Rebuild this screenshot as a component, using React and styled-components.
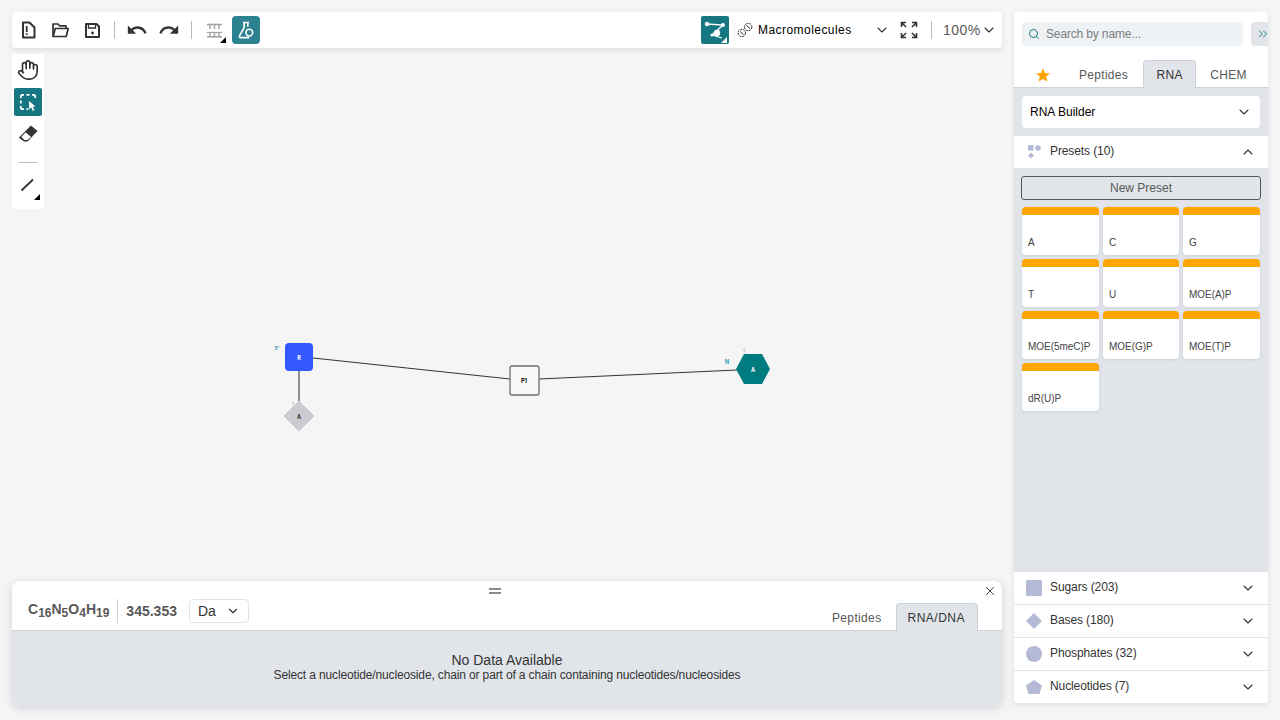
import React from "react";
import styled, { createGlobalStyle } from "styled-components";
import { ChevronDown, ChevronUp, ChevronsRight, Search, X, Hand } from "lucide-react";
import { MdUndo, MdRedo } from "react-icons/md";

const GlobalStyle = createGlobalStyle`
  html, body {
    margin: 0;
    height: 100%;
    background: #f5f5f5;
    overflow: hidden;
    font-family: "Liberation Sans", Inter, sans-serif;
  }
`;

const Page = styled.div`
  width: 1280px;
  height: 720px;
  display: flex;
  gap: 12px;
  padding: 12px 12px 0;
  box-sizing: border-box;
`;

const Main = styled.main`
  position: relative;
  width: 990px;
  height: 694px;
  display: flex;
  flex-direction: column;
`;

const Toolbar = styled.header`
  position: relative;
  z-index: 1;
  height: 36px;
  flex: none;
  display: flex;
  align-items: center;
  gap: 4px;
  padding: 0 2px;
  background: #fff;
  border-radius: 4px;
  box-shadow: 0 2px 5px rgba(103, 104, 132, 0.15);
`;

const Spread = styled.div`
  flex: 1;
`;

const IconButton = styled.div`
  position: relative;
  width: 28px;
  height: 28px;
  flex: none;
  display: flex;
  align-items: center;
  justify-content: center;
  border-radius: ${(p) => (p.$round ? "4px" : "2px")};
  color: ${(p) => (p.$active ? "#fff" : "#333")};
  background: ${(p) => p.$bg || "transparent"};
`;

const Corner = styled.span`
  position: absolute;
  right: 2px;
  bottom: 1px;
  width: 0;
  height: 0;
  border-style: solid;
  border-width: 0 0 6px 6px;
  border-color: transparent transparent ${(p) => p.$color || "#000"} transparent;
`;

const Sep = styled.span`
  width: 1px;
  height: 18px;
  margin: 0 4px;
  background: #b4b9c6;
`;

const ModeSelect = styled.div`
  width: 158px;
  flex: none;
  display: flex;
  align-items: center;
  padding: 0 1px 0 4px;
  box-sizing: border-box;
  font-size: 12px;
  letter-spacing: 0.45px;
  color: #000;
`;

const ModeLabel = styled.span`
  flex: 1;
  margin-left: 5px;
`;

const Zoom = styled.div`
  width: 57px;
  flex: none;
  margin-left: 3px;
  padding-right: 3px;
  box-sizing: border-box;
  display: flex;
  align-items: center;
  font-size: 14px;
  letter-spacing: 0.5px;
  color: #585858;
`;

const Tools = styled.aside`
  position: relative;
  z-index: 1;
  width: 32px;
  height: 155px;
  margin-top: 6px;
  flex: none;
  display: flex;
  flex-direction: column;
  align-items: center;
  padding-top: 2px;
  gap: 4px;
  box-sizing: border-box;
  background: #fff;
  border-radius: 2px;
`;

const ToolSep = styled.span`
  width: 18px;
  height: 1px;
  margin: 10px 0 6px;
  background: #b4b9c6;
`;

const Canvas = styled.svg`
  position: absolute;
  left: 0;
  top: 0;
  width: 990px;
  height: 694px;
`;

const Bottom = styled.section`
  position: relative;
  z-index: 1;
  margin-top: auto;
  height: 125px;
  flex: none;
  display: flex;
  flex-direction: column;
  background: #fff;
  border-radius: 8px;
  overflow: hidden;
  box-shadow: 0 2px 8px rgba(103, 104, 132, 0.25);
`;

const Handle = styled.span`
  position: absolute;
  left: 477px;
  top: 7px;
  width: 12px;
  height: 2px;
  border-top: 2px solid #8a8a8a;
  border-bottom: 2px solid #8a8a8a;
`;

const CloseBtn = styled.span`
  position: absolute;
  right: 5px;
  top: 3px;
  display: flex;
  color: #333;
`;

const BottomBar = styled.div`
  height: 50px;
  flex: none;
  display: flex;
  align-items: flex-end;
  padding: 0 24px 0 16px;
  border-bottom: 1px solid #ccd1da;
  box-sizing: border-box;
`;

const Stats = styled.div`
  flex: 1;
  height: 31px;
  display: flex;
  align-items: center;
  padding-bottom: 7px;
  box-sizing: border-box;
  color: #585858;
  font-size: 14px;
  font-weight: 700;
`;

const Formula = styled.span`
  padding-right: 8px;
  border-right: 1px solid #ccd1da;
  height: 24px;
  line-height: 21px;

  & sub {
    font-size: 12px;
    line-height: 0;
    vertical-align: -3px;
  }
`;

const Mass = styled.span`
  margin-left: 8px;
`;

const Unit = styled.div`
  width: 60px;
  height: 24px;
  margin-left: 12px;
  padding: 0 8px;
  display: flex;
  align-items: center;
  justify-content: space-between;
  box-sizing: border-box;
  border: 1px solid #e1e5ea;
  border-radius: 4px;
  color: #333;
  font-size: 14px;
  font-weight: 400;
`;

const BottomTabs = styled.div`
  display: flex;
  gap: 2px;
  height: 28px;
  align-items: stretch;
  margin-bottom: -1px;
`;

const BottomTab = styled.div`
  padding: 0 12px 0 ${(p) => (p.$active ? 10 : 12)}px;
  display: flex;
  align-items: center;
  font-size: 12px;
  letter-spacing: ${(p) => (p.$active ? 0.5 : 0.35)}px;
  border: 1px solid ${(p) => (p.$active ? "#ccd1da" : "transparent")};
  border-bottom: 0;
  border-radius: 4px 4px 0 0;
  background: ${(p) => (p.$active ? "#e1e5ea" : "transparent")};
  color: ${(p) => (p.$active ? "#333" : "#585858")};
`;

const NoData = styled.div`
  flex: 1;
  display: flex;
  flex-direction: column;
  align-items: center;
  padding-top: 21px;
  background: #e1e5ea;
  color: #333;
  font-size: 14px;
  line-height: 16px;

  & small {
    font-size: 12px;
    letter-spacing: -0.14px;
    line-height: 14px;
  }
`;

const Library = styled.aside`
  width: 254px;
  height: 691px;
  flex: none;
  display: flex;
  flex-direction: column;
  overflow: hidden;
  background: #fff;
  border-radius: 4px;
  box-shadow: 0 2px 5px rgba(103, 104, 132, 0.15);
`;

const SearchRow = styled.div`
  display: flex;
  gap: 8px;
  padding: 10px 0 0 8px;
`;

const SearchBox = styled.div`
  width: 221px;
  height: 24px;
  flex: none;
  display: flex;
  align-items: center;
  gap: 6px;
  padding-left: 6px;
  box-sizing: border-box;
  background: #eff2f5;
  border-radius: 4px;
  color: #7c7c7f;
  font-size: 12px;
  letter-spacing: -0.15px;
`;

const ExpandBtn = styled.div`
  width: 24px;
  height: 24px;
  flex: none;
  display: flex;
  align-items: center;
  justify-content: center;
  background: #e1e5ea;
  border-radius: 4px;
  color: #167782;
`;

const LibTabs = styled.div`
  height: 28px;
  margin-top: 14px;
  flex: none;
  display: flex;
  padding-left: 8px;
  box-sizing: border-box;
  border-bottom: 1px solid #ccd1da;
`;

const LibTab = styled.div`
  height: 28px;
  padding: 0 ${(p) => p.$pad || 12}px;
  margin-right: 1px;
  display: flex;
  align-items: center;
  box-sizing: border-box;
  font-size: 12px;
  letter-spacing: 0.3px;
  border: 1px solid ${(p) => (p.$active ? "#ccd1da" : "transparent")};
  border-bottom: 0;
  border-radius: 4px 4px 0 0;
  background: ${(p) => (p.$active ? "#e1e5ea" : "transparent")};
  color: ${(p) => (p.$active ? "#333" : "#585858")};
`;

const BuilderWrap = styled.div`
  height: 48px;
  flex: none;
  padding: 8px;
  box-sizing: border-box;
  background: #e1e5ea;
`;

const Builder = styled.div`
  height: 32px;
  display: flex;
  align-items: center;
  justify-content: space-between;
  padding: 0 8px;
  background: #fff;
  border-radius: 4px;
  color: #000;
  font-size: 12px;
`;

const SectionHead = styled.div`
  height: ${(p) => p.$h || 33}px;
  flex: none;
  display: flex;
  align-items: center;
  padding: 0 12px;
  box-sizing: border-box;
  background: #fff;
  border-bottom: ${(p) => (p.$last ? "0" : "1px solid #e1e5ea")};
  color: #333;
  font-size: 12px;
  letter-spacing: -0.1px;
`;

const SectionIcon = styled.svg`
  width: 16px;
  height: 16px;
  flex: none;
  margin-right: 8px;
  color: #b4b9d6;
`;

const SectionTitle = styled.span`
  flex: 1;
  margin-top: -2px;
`;

const Presets = styled.div`
  flex: 1;
  background: #e1e5ea;
  padding: 8px 8px 0;
`;

const NewPreset = styled.div`
  height: 24px;
  margin: 0 -1px 7px;
  display: flex;
  align-items: center;
  justify-content: center;
  box-sizing: border-box;
  border: 1px solid #585858;
  border-radius: 3px;
  color: #585858;
  font-size: 12px;
`;

const CardGrid = styled.div`
  display: grid;
  grid-template-columns: 77px 76px 77px;
  grid-auto-rows: 48px;
  gap: 4px;
`;

const Card = styled.div`
  display: flex;
  align-items: flex-end;
  padding: 0 0 6px 6px;
  box-sizing: border-box;
  background: #fff;
  border-top: 8px solid #ffa500;
  border-radius: 4px;
  box-shadow: 0 1px 3px rgba(103, 104, 132, 0.15);
  color: #444;
  font-size: 10px;
  letter-spacing: -0.05px;
  line-height: 12px;
  white-space: nowrap;
`;

const NewFileIcon = () => (
  <svg width="20" height="20" viewBox="0 0 20 20" fill="none">
    <path d="M5 2.500h6.500L16.500 7.500v10H5z" stroke="#333" strokeWidth="2" strokeLinejoin="round" />
    <path d="M7.800 6h1.800v6H7.800zM7.800 13.200h1.800V15H7.800z" fill="#333" />
  </svg>
);

const OpenIcon = () => (
  <svg width="20" height="20" viewBox="0 0 20 20" fill="none" stroke="#333" strokeWidth="1.700" strokeLinejoin="round">
    <path d="M3 16.500V4h5l1.600 1.800H16v2.400" />
    <path d="M3.200 16.500L5.200 8.500h13l-2 8z" />
  </svg>
);

const SaveIcon = () => (
  <svg width="20" height="20" viewBox="0 0 20 20" fill="none">
    <path d="M4 4h10.500L17 6.500V17H4z" stroke="#333" strokeWidth="2" strokeLinejoin="round" />
    <path d="M6.500 4v4h7V4" stroke="#333" strokeWidth="1.300" />
    <circle cx="10.500" cy="13" r="1.400" fill="#333" />
  </svg>
);

const RulerIcon = () => (
  <svg width="20" height="20" viewBox="0 0 20 20" fill="none" stroke="#a3a3a3">
    <path d="M3 4.500h15" strokeWidth="1.600" />
    <path d="M6 5v4M10.500 5v4M15 5v4" strokeWidth="1.400" />
    <path d="M3 12.500h15" strokeWidth="1.200" />
    <path d="M6 13v3.500M10.500 13v3.500M15 13v3.500" strokeWidth="1.400" />
    <path d="M3 16.800h15" strokeWidth="1.600" />
  </svg>
);

const FlaskIcon = () => (
  <svg width="20" height="20" viewBox="0 0 20 20" fill="none" stroke="#fff" strokeWidth="1.600" strokeLinejoin="round">
    <path d="M7 2.500h6M8.200 2.500v5L3.600 15.600c-.6 1.100 0 2 1.100 2h8.600" />
    <path d="M11.800 2.500v4.200" />
    <circle cx="13.300" cy="12.600" r="3.400" />
  </svg>
);

const MacroIcon = () => (
  <svg width="28" height="28" viewBox="0 0 28 28" fill="none" stroke="#fff" strokeWidth="1.300">
    <path d="M6 8l16 1-11 10 10 3" />
    <circle cx="6" cy="8" r="2.200" fill="#fff" stroke="none" />
    <circle cx="22" cy="9" r="2" fill="#fff" stroke="none" />
    <circle cx="16" cy="17" r="3.200" fill="#fff" stroke="none" />
    <circle cx="11" cy="19" r="1.600" fill="#fff" stroke="none" />
  </svg>
);

const DnaIcon = () => (
  <svg width="16" height="16" viewBox="0 0 16 16" fill="none" stroke="#333" strokeWidth="1">
    <circle cx="4.800" cy="11" r="3.700" strokeDasharray="2.200 0.800" />
    <circle cx="11.200" cy="5" r="3.700" strokeDasharray="2.200 0.800" />
    <path d="M9.500 3.500l3.500 3M3 9.500l3.500 3" />
  </svg>
);

const FullscreenIcon = () => (
  <svg width="20" height="20" viewBox="0 0 20 20" fill="none" stroke="#333" strokeWidth="1.600">
    <path d="M2.500 7V2.500H7M3 3l4 4M13 2.500h4.500V7M17 3l-4 4M2.500 13v4.500H7M3 17l4-4M17.500 13v4.500H13M17 17l-4-4" />
  </svg>
);

const SelectIcon = () => (
  <svg width="20" height="20" viewBox="0 0 20 20" fill="none">
    <path d="M2.800 6V4.400c0-.9.700-1.600 1.600-1.600H6M8.500 2.800h3M14 2.800h1.600c.9 0 1.600.7 1.600 1.600V6M2.800 8.500v3M2.800 14v1.600c0 .9.700 1.600 1.600 1.600H6M8.500 17.200h2" stroke="#fff" strokeWidth="1.800" />
    <path d="M11 9l6.500 5.400-2.800.4 1.700 3.400-1.500.7-1.600-3.400-2 1.800z" fill="#fff" />
  </svg>
);

const EraserIcon = () => (
  <svg width="20" height="20" viewBox="0 0 20 20">
    <path d="M13 1.500l6.500 5.500-10 10.500H6L.8 13.800z" fill="#333" />
    <path d="M7.600 8.200l5.400 4.800-3.800 3H6.500L3.400 13z" fill="#fff" />
  </svg>
);

const LineIcon = () => (
  <svg width="20" height="20" viewBox="0 0 20 20" stroke="#333" strokeWidth="1.800">
    <path d="M3.500 13.500L15 2.500" />
  </svg>
);

const StarIcon = () => (
  <svg width="16" height="16" viewBox="0 0 16 16" fill="#ffa500">
    <path d="M8 1.200l2 4.700 5 .4-3.800 3.300 1.200 5L8 12l-4.400 2.600 1.200-5L1 6.300l5-.4z" />
  </svg>
);

const sectionShapes = {
  presets: (
    <g fill="currentColor">
      <rect x="2" y="1" width="5.500" height="5.500" rx="1" />
      <circle cx="12" cy="4" r="2.800" />
      <path d="M5 8.500l3 3-3 3-3-3z" />
    </g>
  ),
  sugars: <rect width="16" height="16" rx="1.500" fill="currentColor" />,
  bases: <path d="M8 0l8 8-8 8-8-8z" fill="currentColor" />,
  phosphates: <circle cx="8" cy="8" r="8" fill="currentColor" />,
  nucleotides: <path d="M8 1l8 5.500-2.500 8.500h-11L0 6.500z" fill="currentColor" />,
};

const presets = ["A", "C", "G", "T", "U", "MOE(A)P", "MOE(5meC)P", "MOE(G)P", "MOE(T)P", "dR(U)P"];

const sections = [
  { key: "sugars", label: "Sugars (203)" },
  { key: "bases", label: "Bases (180)" },
  { key: "phosphates", label: "Phosphates (32)" },
  { key: "nucleotides", label: "Nucleotides (7)" },
];

const Diagram = () => (
  <Canvas viewBox="12 12 990 694" fontFamily="Inter, sans-serif" fontWeight="700" textAnchor="middle">
    <path d="M313 358L510 379M539 379L737 370" stroke="#333" strokeWidth="1" />
    <path d="M299 371V402" stroke="#8f8f8f" strokeWidth="2" />
    <rect x="285" y="343" width="28" height="28" rx="4" fill="#3358ff" />
    <text x="299" y="360" fontSize="5.500" fill="#fff">R</text>
    <text x="277" y="350" fontSize="5" fill="#2a9db0">5'</text>
    <path d="M299 401l15 15-15 15-15-15z" fill="#cdcad4" stroke="#cdcad4" strokeLinejoin="round" />
    <text x="299" y="419" fontSize="5.500" fill="#333">A</text>
    <text x="293" y="406" fontSize="5" fontWeight="400" fill="#999">1</text>
    <rect x="510" y="366" width="29" height="29" rx="2" fill="#f7f8fa" stroke="#6f6f6f" strokeWidth="1.300" />
    <text x="524" y="383" fontSize="5.500" fill="#000">P1</text>
    <path d="M736 369l8-15h18l8 15-8 15h-18z" fill="#007c80" />
    <text x="753" y="372" fontSize="5.500" fill="#fff">A</text>
    <text x="727" y="364" fontSize="5.500" fill="#2a9db0">N</text>
    <text x="744" y="353" fontSize="5" fontWeight="400" fill="#999">1</text>
  </Canvas>
);

export default function App() {
  return (
    <>
      <GlobalStyle />
      <Page>
        <Main>
          <Diagram />
          <Toolbar>
            <IconButton><NewFileIcon /></IconButton>
            <IconButton><OpenIcon /></IconButton>
            <IconButton><SaveIcon /></IconButton>
            <Sep />
            <IconButton><MdUndo size={22} /></IconButton>
            <IconButton><MdRedo size={22} /></IconButton>
            <Sep />
            <IconButton><RulerIcon /><Corner /></IconButton>
            <IconButton $active $round $bg="#2c8290"><FlaskIcon /></IconButton>
            <Spread />
            <IconButton $active $bg="#167782"><MacroIcon /><Corner $color="#fff" /></IconButton>
            <ModeSelect>
              <DnaIcon />
              <ModeLabel>Macromolecules</ModeLabel>
              <ChevronDown size={16} strokeWidth={1.600} color="#333" />
            </ModeSelect>
            <IconButton><FullscreenIcon /></IconButton>
            <Sep />
            <Zoom>
              100%
              <ChevronDown size={16} strokeWidth={1.600} color="#333" />
            </Zoom>
          </Toolbar>
          <Tools>
            <IconButton><Hand size={22} strokeWidth={1.800} /></IconButton>
            <IconButton $active $bg="#167782"><SelectIcon /></IconButton>
            <IconButton><EraserIcon /></IconButton>
            <ToolSep />
            <IconButton><LineIcon /><Corner /></IconButton>
          </Tools>
          <Bottom>
            <Handle />
            <CloseBtn><X size={14} strokeWidth={1.600} /></CloseBtn>
            <BottomBar>
              <Stats>
                <Formula>C<sub>16</sub>N<sub>5</sub>O<sub>4</sub>H<sub>19</sub></Formula>
                <Mass>345.353</Mass>
                <Unit>
                  Da
                  <ChevronDown size={14} strokeWidth={2} />
                </Unit>
              </Stats>
              <BottomTabs>
                <BottomTab>Peptides</BottomTab>
                <BottomTab $active>RNA/DNA</BottomTab>
              </BottomTabs>
            </BottomBar>
            <NoData>
              No Data Available
              <small>Select a nucleotide/nucleoside, chain or part of a chain containing nucleotides/nucleosides</small>
            </NoData>
          </Bottom>
        </Main>
        <Library>
          <SearchRow>
            <SearchBox>
              <Search size={12} color="#167782" strokeWidth={2} />
              Search by name...
            </SearchBox>
            <ExpandBtn><ChevronsRight size={14} strokeWidth={1.600} /></ExpandBtn>
          </SearchRow>
          <LibTabs>
            <LibTab><StarIcon /></LibTab>
            <LibTab $pad={13}>Peptides</LibTab>
            <LibTab $active $pad={12.5}>RNA</LibTab>
            <LibTab>CHEM</LibTab>
          </LibTabs>
          <BuilderWrap>
            <Builder>
              RNA Builder
              <ChevronDown size={16} strokeWidth={1.600} color="#333" />
            </Builder>
          </BuilderWrap>
          <SectionHead $h={32} $last>
            <SectionIcon viewBox="0 0 16 16">{sectionShapes.presets}</SectionIcon>
            <SectionTitle>Presets (10)</SectionTitle>
            <ChevronUp size={16} strokeWidth={1.600} />
          </SectionHead>
          <Presets>
            <NewPreset>New Preset</NewPreset>
            <CardGrid>
              {presets.map((name) => (
                <Card key={name}>{name}</Card>
              ))}
            </CardGrid>
          </Presets>
          {sections.map((s, i) => (
            <SectionHead key={s.key} $last={i === sections.length - 1} $h={i === sections.length - 1 ? 32 : 33}>
              <SectionIcon viewBox="0 0 16 16">{sectionShapes[s.key]}</SectionIcon>
              <SectionTitle>{s.label}</SectionTitle>
              <ChevronDown size={16} strokeWidth={1.600} />
            </SectionHead>
          ))}
        </Library>
      </Page>
    </>
  );
}
